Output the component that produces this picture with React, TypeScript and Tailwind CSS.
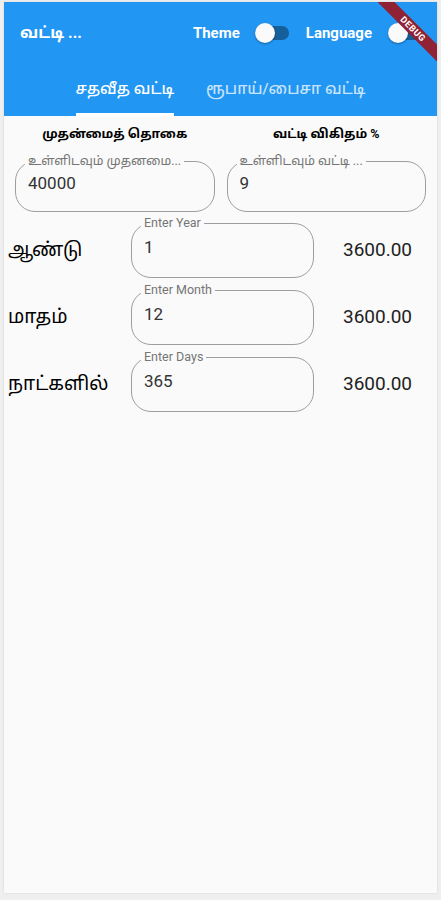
import { useState } from "react"

const fontStack = { fontFamily: 'Roboto, "Noto Sans Tamil", "Noto Sans", "DejaVu Sans", sans-serif' }

function Switch({ on }: { on: boolean }) {
  return (
    <div className="relative w-[34px] h-[20px] flex items-center">
      <div className="w-[34px] h-[14px] rounded-full bg-[#155f9a]" />
      <div
        className={
          "absolute top-0 w-[20px] h-[20px] rounded-full bg-[#fafafa] shadow-[0_1px_2px_rgba(0,0,0,0.35)] " +
          (on ? "right-0" : "left-0")
        }
      />
    </div>
  )
}

function OutlinedField({
  label,
  value,
  className,
}: {
  label: string
  value: string
  className: string
}) {
  return (
    <div className={"relative rounded-[20px] border border-[#9e9e9e] flex items-center " + className}>
      <span className="absolute -top-[9px] left-[9px] bg-[#fafafa] px-[3px] text-[12.5px] leading-[16px] text-[#757575] whitespace-nowrap">
        {label}
      </span>
      <span className="pl-[12px] -mt-[5px] text-[17px] text-[#333]">{value}</span>
    </div>
  )
}

function PeriodRow({ name, label, value }: { name: string; label: string; value: string }) {
  return (
    <div className="flex items-center">
      <div className="w-[127px] pl-[4px] text-[19px] text-black">{name}</div>
      <OutlinedField label={label} value={value} className="w-[183px] h-[55px]" />
      <div className="flex-1 text-center pl-[4px] text-[19px] text-[#222]">3600.00</div>
    </div>
  )
}

export default function App() {
  const [tab] = useState(0)
  const tabs = ["சதவீத வட்டி", "ரூபாய்/பைசா வட்டி"]

  return (
    <div className="w-[441px] h-[900px] bg-[#efefef] pl-[4px] pr-[4px] pt-[2px] pb-[7px]" style={fontStack}>
      <div className="relative h-full bg-[#fafafa] overflow-hidden shadow-[0_0_2px_rgba(0,0,0,0.12)]">
        {/* app bar */}
        <div className="bg-[#2196f3] text-white">
          <div className="h-[62px] flex items-center pl-[16px] pr-[15px]">
            <div className="flex-1 text-[16px] font-bold">வட்டி ...</div>
            <div className="text-[15px] font-bold mr-[15px]">Theme</div>
            <Switch on={false} />
            <div className="text-[15px] font-bold ml-[17px] mr-[16px]">Language</div>
            <Switch on={false} />
          </div>
          <div className="h-[52px] flex justify-center">
            {tabs.map((t, i) => (
              <div key={t} className="px-[16px] flex flex-col items-center">
                <div className={"flex-1 flex items-center pt-[2px] text-[15.5px] font-medium " + (i === tab ? "text-white" : "text-white/75")}>
                  {t}
                </div>
                <div className={"h-[3px] w-full " + (i === tab ? "bg-white" : "bg-transparent")} />
              </div>
            ))}
          </div>
        </div>

        {/* debug banner */}
        <div className="absolute top-[21px] -right-[31px] w-[110px] h-[12px] rotate-45 bg-[#8f2235] flex items-center justify-center">
          <span className="text-[9px] font-bold tracking-[0.5px] text-white leading-none">DEBUG</span>
        </div>

        {/* amount & rate */}
        <div className="grid grid-cols-2 gap-[12px] px-[11px] pt-[9px]">
          <div className="flex flex-col items-center">
            <div className="text-[12.5px] font-bold text-black leading-[18px]">முதன்மைத் தொகை</div>
            <div className="mt-[18px] w-full">
              <OutlinedField label="உள்ளிடவும் முதனமை..." value="40000" className="w-full h-[51px]" />
            </div>
          </div>
          <div className="flex flex-col items-center">
            <div className="text-[12.5px] font-bold text-black leading-[18px]">வட்டி விகிதம் %</div>
            <div className="mt-[18px] w-full">
              <OutlinedField label="உள்ளிடவும் வட்டி ..." value="9" className="w-full h-[51px]" />
            </div>
          </div>
        </div>

        {/* periods */}
        <div className="flex flex-col gap-[12px] pt-[11px]">
          <PeriodRow name="ஆண்டு" label="Enter Year" value="1" />
          <PeriodRow name="மாதம்" label="Enter Month" value="12" />
          <PeriodRow name="நாட்களில்" label="Enter Days" value="365" />
        </div>
      </div>
    </div>
  )
}
